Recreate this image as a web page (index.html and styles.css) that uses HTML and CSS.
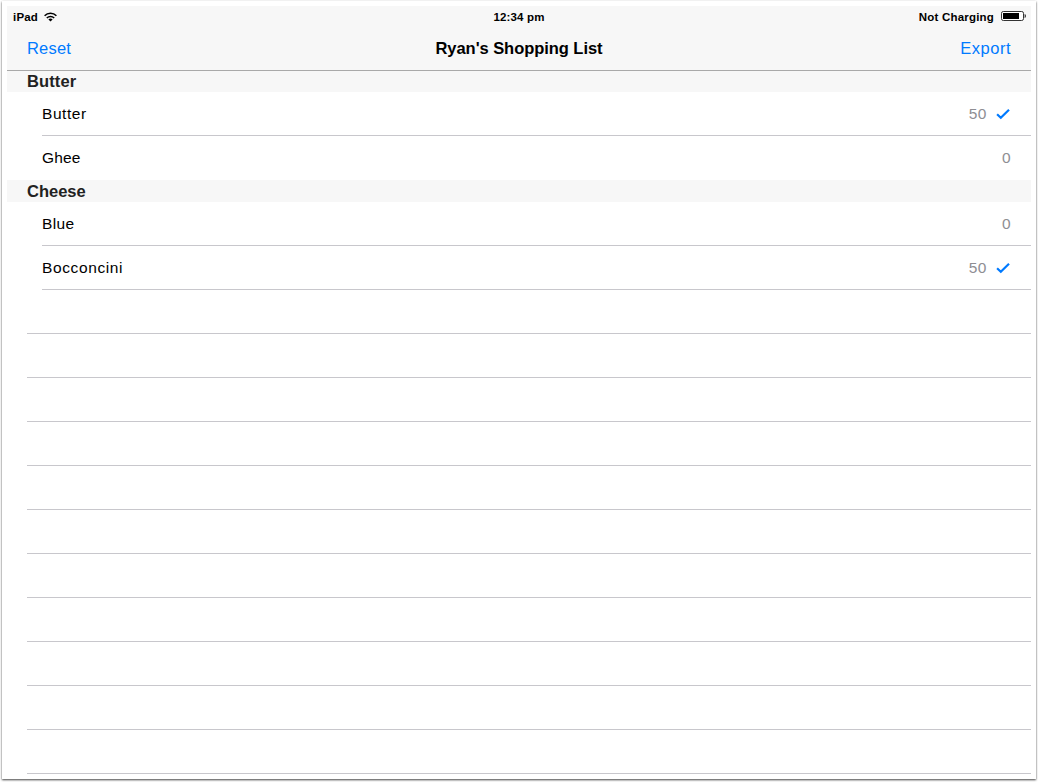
FILE: index.html
```html
<!DOCTYPE html>
<html lang="en">
<head>
<meta charset="utf-8">
<title>Ryan's Shopping List</title>
<link rel="stylesheet" href="styles.css">
</head>
<body>
<div class="window">
  <div class="screen">
    <header class="header">
      <div class="status">
        <div class="status-left"><span class="device">iPad</span>
          <svg class="wifi" width="13" height="10" viewBox="0 0 13 10" fill="none" stroke="#000" stroke-width="1.6"><path d="M.6 3.7a8.4 8.4 0 0 1 11.8 0M2.8 6a5.3 5.3 0 0 1 7.4 0"/><path d="M4.4 7.5a3 3 0 0 1 4.2 0L6.5 9.6z" fill="#000" stroke="none"/></svg>
        </div>
        <span class="clock">12:34 pm</span>
        <div class="status-right"><span class="charge">Not Charging</span>
          <svg class="battery" width="25" height="10" viewBox="0 0 25 10"><rect x=".5" y=".5" width="22" height="9" rx="1.8" fill="#fff" stroke="#333"/><rect x="2" y="2" width="16" height="6" fill="#000"/><path d="M23.7 3v4c1.4-.5 1.4-3.5 0-4z" fill="#000"/></svg>
        </div>
      </div>
      <nav class="nav">
        <a class="action reset">Reset</a>
        <h1 class="title">Ryan's Shopping List</h1>
        <a class="action export">Export</a>
      </nav>
    </header>
    <main>
      <h2 class="section first">Butter</h2>
      <div class="row"><span class="name n-butter">Butter</span><span class="qty">50</span><svg class="check" width="14" height="12" viewBox="0 0 14 12"><path d="M1.1 6.3 4.8 9.8 13 1.7" fill="none" stroke="#007aff" stroke-width="2.2"/></svg></div>
      <div class="row last"><span class="name n-ghee">Ghee</span><span class="qty">0</span></div>
      <h2 class="section cheese">Cheese</h2>
      <div class="row"><span class="name n-blue">Blue</span><span class="qty">0</span></div>
      <div class="row"><span class="name n-bocconcini">Bocconcini</span><span class="qty">50</span><svg class="check" width="14" height="12" viewBox="0 0 14 12"><path d="M1.1 6.3 4.8 9.8 13 1.7" fill="none" stroke="#007aff" stroke-width="2.2"/></svg></div>
      <div class="blank"></div><div class="blank"></div><div class="blank"></div><div class="blank"></div>
      <div class="blank"></div><div class="blank"></div><div class="blank"></div><div class="blank"></div>
      <div class="blank"></div><div class="blank"></div><div class="blank"></div>
    </main>
  </div>
</div>
</body>
</html>
```
FILE: styles.css
```css
* { box-sizing: border-box; }
body { margin: 0; width: 1038px; height: 782px; padding: 1px 2px 3px; overflow: hidden; background: #fff; font-family: "Liberation Sans", Arial, sans-serif; color: #000; }
.window { width: 1034px; height: 778px; padding: 5px; background: #fff; box-shadow: 0 1px 2px rgba(0, 0, 0, .75); }
.screen { width: 1024px; }
.header { height: 65px; background: #f7f7f7; border-bottom: 1px solid #a9a9a9; }
.status { height: 20px; display: grid; grid-template-columns: 1fr auto 1fr; align-items: center; padding: 2px 6px 0 6px; font-size: 11.5px; font-weight: bold; line-height: 18px; }
.status-left, .status-right { display: flex; align-items: center; }
.status-left { gap: 6px; letter-spacing: .2px; }
.status-right { justify-content: flex-end; gap: 7px; letter-spacing: .2px; margin-right: -1px; }
.clock { letter-spacing: .15px; }
.battery { margin-top: -2px; }
.nav { height: 44px; display: grid; grid-template-columns: 1fr auto 1fr; align-items: center; padding: 0 20px; }
.action { font-size: 16.5px; color: #007aff; letter-spacing: .2px; line-height: 18px; }
.export { text-align: right; letter-spacing: .5px; }
.title { margin: 0; font-size: 16.5px; font-weight: bold; letter-spacing: -.05px; }
.section { margin: 0; height: 22px; padding-left: 20px; background: #f7f7f7; font-size: 16.5px; line-height: 23px; color: #222; }
.first { height: 21px; line-height: 20px; letter-spacing: .1px; }
.row { height: 44px; margin-left: 35px; padding-right: 20px; display: flex; align-items: center; border-bottom: 1px solid #c8c7cc; font-size: 15.5px; }
.last { border-bottom-color: transparent; }
.name { flex: 1; }
.n-butter { letter-spacing: .55px; }
.n-ghee { letter-spacing: .15px; }
.n-blue { letter-spacing: .35px; }
.n-bocconcini { letter-spacing: .62px; }
.qty { color: #8e8e93; letter-spacing: .5px; }
.check { margin-left: 9px; margin-right: 1px; }
.blank { height: 44px; margin-left: 20px; border-bottom: 1px solid #c8c7cc; }
```
